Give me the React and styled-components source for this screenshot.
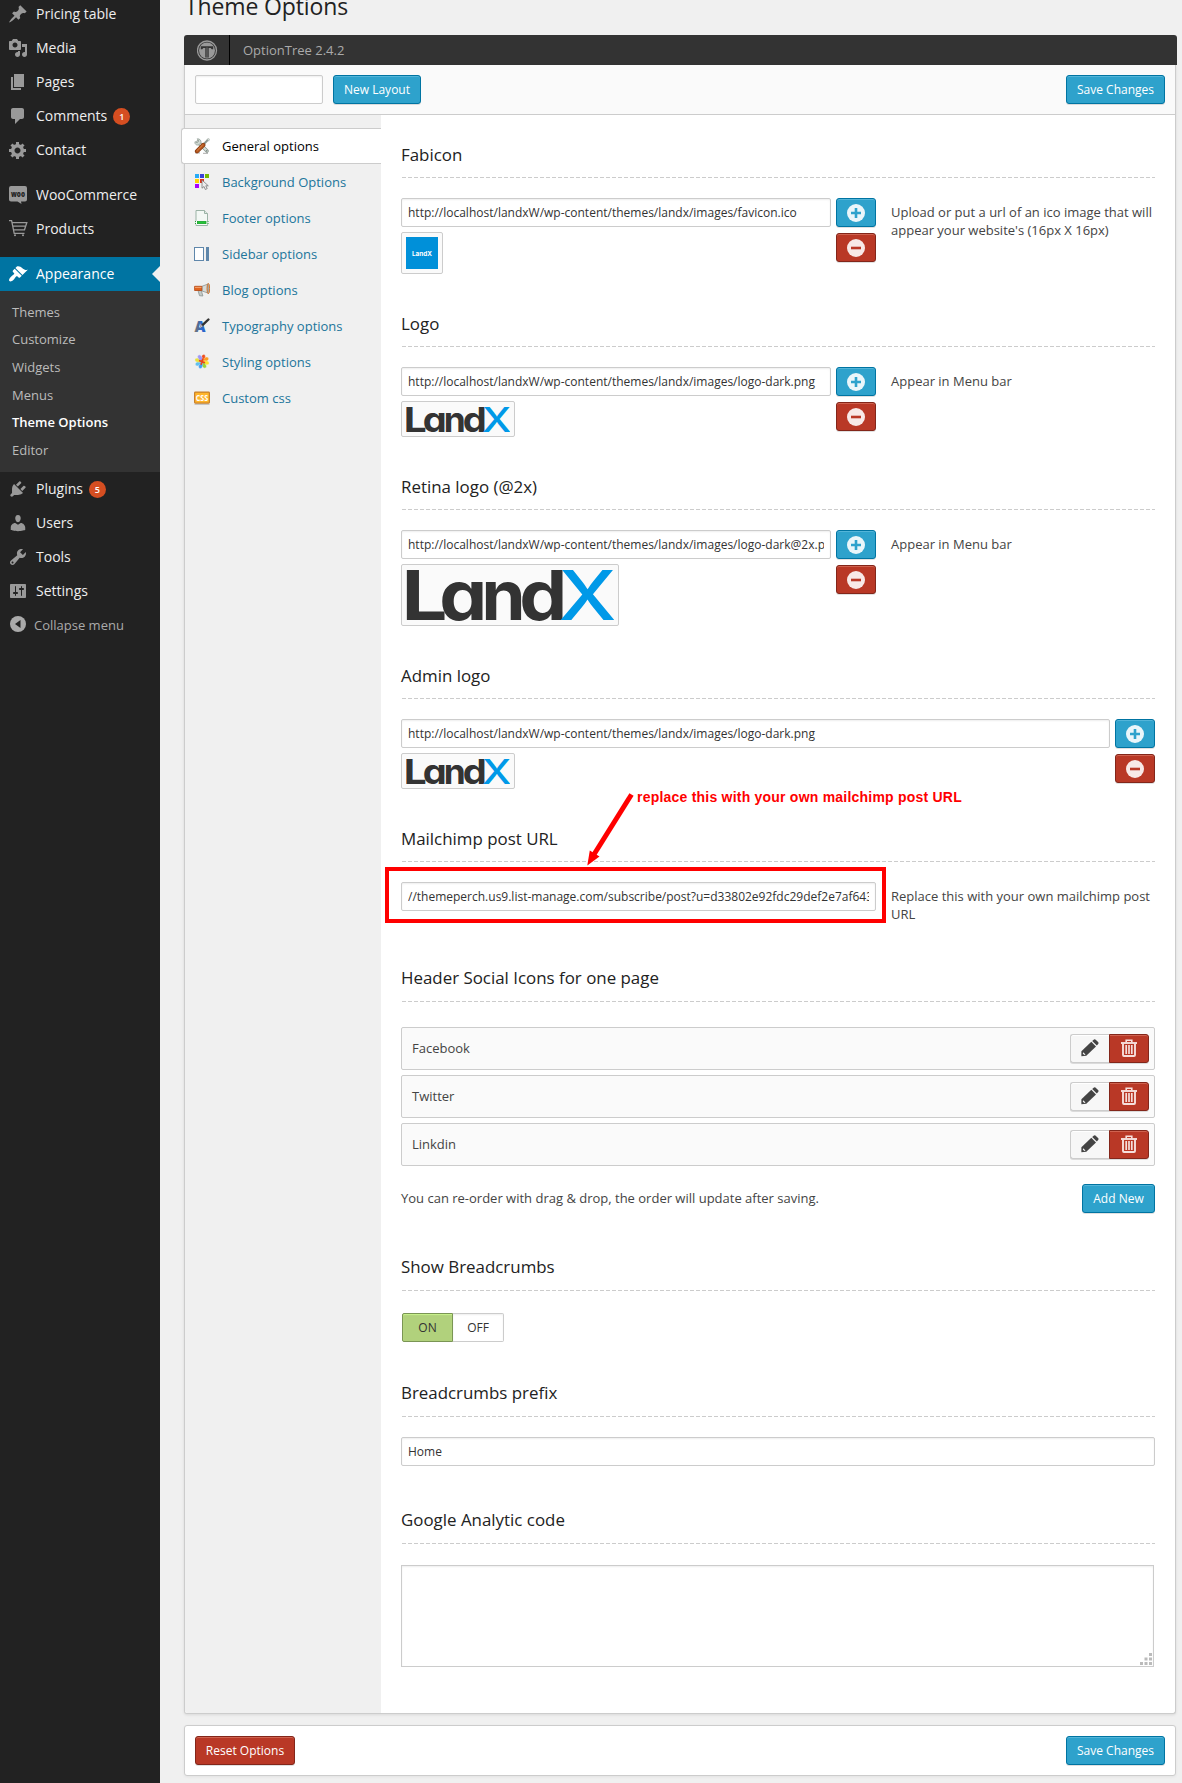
import React from "react";
import styled, { createGlobalStyle } from "styled-components";

const Global = createGlobalStyle`
  *, *::before, *::after { box-sizing: border-box; }
  html, body { margin: 0; padding: 0; background: #f0f0f0; }
  body {
    font-family: "Open Sans", sans-serif;
    font-size: 13px;
    line-height: 18px;
    color: #444;
    overflow: hidden;
  }
  input, textarea, button { font-family: inherit; }
`;

/* ---------- shell ---------- */

const Shell = styled.div`
  display: flex;
  width: 1182px;
  height: 1783px;
  overflow: hidden;
`;

const AdminMenu = styled.nav`
  flex: 0 0 160px;
  background: #222;
  margin-top: -3px;
  display: flex;
  flex-direction: column;
`;

const MenuItem = styled.a`
  position: relative;
  display: flex;
  align-items: center;
  height: 34px;
  flex: none;
  padding-left: 8px;
  font-size: 14px;
  color: ${(p) => (p.$active ? "#fff" : "#eee")};
  background: ${(p) => (p.$active ? "#0074a2" : "transparent")};
  margin-top: ${(p) => (p.$spaced ? 11 : 0)}px;
  svg {
    flex: none;
    width: 20px;
    height: 20px;
    margin-right: 8px;
    fill: ${(p) => (p.$active ? "#fff" : "#999")};
  }
`;

const ActiveArrow = styled.span`
  position: absolute;
  right: 0;
  top: 9px;
  border: 8px solid transparent;
  border-left-width: 0;
  border-right-color: #f0f0f0;
`;

const Count = styled.span`
  width: 17px;
  height: 17px;
  margin: 1px 0 0 6px;
  border-radius: 50%;
  background: #d54e21;
  color: #fff;
  font-size: 9px;
  font-weight: 600;
  line-height: 17px;
  text-align: center;
`;

const Submenu = styled.div`
  flex: none;
  background: #333;
  padding: 7px 0 8px;
  height: 181px;
  display: grid;
  grid-template-rows: repeat(6, 1fr);
`;

const SubItem = styled.a`
  display: flex;
  align-items: center;
  padding-left: 12px;
  font-size: 13px;
  color: ${(p) => (p.$current ? "#fff" : "#bbb")};
  font-weight: ${(p) => (p.$current ? 600 : 400)};
`;

const Collapse = styled.div`
  display: flex;
  align-items: center;
  height: 34px;
  padding-left: 10px;
  gap: 8px;
  font-size: 13px;
  color: #aaa;
  svg { margin-top: -2px; }
`;

const Main = styled.main`
  flex: 1;
  min-width: 0;
  padding-left: 24px;
`;

const PageTitle = styled.h2`
  margin: -8px 0 0;
  height: 43px;
  padding-left: 1px;
  font-size: 23px;
  line-height: 29px;
  font-weight: 400;
  letter-spacing: -0.13px;
  color: #222;
`;

/* ---------- option tree chrome ---------- */

const Header = styled.header`
  display: flex;
  align-items: center;
  width: 993px;
  height: 30px;
  border-radius: 3px 3px 0 0;
  background: #333;
  color: #aaa;
`;

const HeaderLogo = styled.div`
  width: 46px;
  height: 30px;
  padding: 5px 0 0 13px;
  border-right: 1px solid #000;
  margin-right: 13px;
`;

const Panel = styled.section`
  width: 992px;
  border: 1px solid #ccc;
  border-top: 0;
  border-radius: 0 0 3px 3px;
  background: #fff;
  box-shadow: 0 1px 3px rgba(0, 0, 0, 0.1);
`;

const Toolbar = styled.div`
  display: flex;
  align-items: flex-start;
  height: 50px;
  padding: 10px;
  gap: 10px;
  background: #fafafa;
  border-bottom: 1px solid #ccc;
`;

const Footer = styled.section`
  display: flex;
  justify-content: space-between;
  width: 992px;
  height: 51px;
  margin-top: 11px;
  padding: 10px;
  border: 1px solid #ccc;
  border-radius: 3px;
  background: #fff;
  box-shadow: 0 1px 3px rgba(0, 0, 0, 0.06);
`;

const Spacer = styled.div`
  flex: 1;
`;

const tones = {
  blue: { bg: "#2ea2cc", line: "#0074a2", lit: "rgba(120,200,230,.5)", fg: "#fff" },
  red: { bg: "#b93826", line: "#83261a", lit: "rgba(230,140,120,.5)", fg: "#fff" },
  plain: { bg: "#f7f7f7", line: "#ccc", lit: "#fff", fg: "#555" },
};

const Button = styled.button`
  display: flex;
  align-items: center;
  justify-content: center;
  flex: none;
  width: ${(p) => p.$w}px;
  height: 29px;
  padding: 0;
  font-size: 12px;
  line-height: 26px;
  white-space: nowrap;
  color: ${(p) => tones[p.$tone].fg};
  background: ${(p) => tones[p.$tone].bg};
  border: 1px solid ${(p) => tones[p.$tone].line};
  border-radius: ${(p) => p.$round || "3px"};
  border-right-width: ${(p) => (p.$joined ? 0 : 1)}px;
  box-shadow: inset 0 1px 0 ${(p) => tones[p.$tone].lit}, 0 1px 0 rgba(0, 0, 0, 0.12);
`;

const Columns = styled.div`
  display: flex;
  height: 1598px;
`;

const Tabs = styled.div`
  flex: 0 0 196px;
  background: #f0f0f0;
  padding-top: 13px;
  border-radius: 0 0 0 3px;
`;

const Tab = styled.a`
  display: flex;
  align-items: center;
  height: 36px;
  padding-left: 9px;
  gap: 12px;
  color: #21759b;
  svg { flex: none; }
  ${(p) =>
    p.$active &&
    `
    margin-left: -4px;
    padding-left: 12px;
    background: #fff;
    color: #000;
    border: 1px solid #ccc;
    border-right: 0;
    border-radius: 3px 0 0 3px;
  `}
`;

const Content = styled.div`
  width: 794px;
  padding: 17px 20px 0;
`;

/* ---------- fields ---------- */

const Section = styled.section`
  padding-bottom: ${(p) => p.$after ?? 27}px;
`;

const Label = styled.h3`
  margin: 0;
  height: 46px;
  padding-top: ${(p) => (p.$raised ? 11 : 12)}px;
  font-size: 16.9px;
  line-height: 22px;
  font-weight: 400;
  color: #222;
  background: repeating-linear-gradient(90deg, #fff 0 1px, #ccc 1px 5px, #fff 5px 6px) 0 45px / 100% 1px no-repeat;
`;

const Field = styled.div`
  display: flex;
  align-items: flex-start;
  gap: 15px;
  padding-top: ${(p) => p.$top ?? 20}px;
`;

const Control = styled.div`
  position: relative;
  display: grid;
  grid-template-columns: ${(p) => (p.$buttons ? "1fr 40px" : "1fr")};
  column-gap: 5px;
  width: ${(p) => (p.$wide ? 754 : 475)}px;
  flex: none;
`;

const Stack = styled.div`
  display: flex;
  flex-direction: column;
  align-items: flex-start;
  gap: ${(p) => p.$gap || 5}px;
`;

const TextInput = styled.input`
  display: block;
  width: ${(p) => (p.$w ? p.$w + "px" : "100%")};
  height: 29px;
  margin: 0;
  padding: 0 6px;
  border: 1px solid #ccc;
  border-radius: 2px;
  background: #fff;
  box-shadow: inset 0 1px 2px rgba(0, 0, 0, 0.07);
  color: #333;
  font-size: 12px;
  outline: none;
`;

const Thumb = styled.div`
  padding: 4px;
  border: 1px solid #ccc;
  border-radius: 2px;
  background: #fafafa;
  svg { display: block; }
`;

const Desc = styled.p`
  margin: 0;
  width: 264px;
  padding: 5px 0;
  font-size: 13px;
  line-height: 18.2px;
  white-space: pre-line;
`;

const Row = styled.div`
  display: flex;
  align-items: center;
  justify-content: space-between;
  height: 43px;
  margin-bottom: 5px;
  padding: 0 5px 0 10px;
  border: 1px solid #ccc;
  border-radius: 2px;
  background: #fafafa;
`;

const RowText = styled.span`
  padding-bottom: 2px;
`;

const Pair = styled.div`
  display: flex;
  svg { margin-top: -2px; }
`;

const AddRow = styled.div`
  display: flex;
  align-items: center;
  justify-content: space-between;
  padding-top: 13px;
`;

const Switch = styled.div`
  display: flex;
  margin-left: 1px;
`;

const SwitchSide = styled.span`
  width: 51px;
  height: 29px;
  font-size: 12px;
  line-height: 27px;
  text-align: center;
  color: #333;
  border: 1px solid ${(p) => (p.$on ? "#7a9554" : "#ccc")};
  border-left-width: ${(p) => (p.$on ? 1 : 0)}px;
  border-radius: ${(p) => (p.$on ? "2px 0 0 2px" : "0 2px 2px 0")};
  background: ${(p) => (p.$on ? "#b1d17c" : "#fff")};
  box-shadow: inset 0 1px ${(p) => (p.$on ? "1px #c9f28c" : "2px rgba(0,0,0,.07)")};
`;

const CodeWrap = styled.div`
  position: relative;
  width: 753px;
  height: 102px;
  svg { position: absolute; right: 2px; bottom: 2px; }
`;

const Code = styled.textarea`
  display: block;
  width: 100%;
  height: 100%;
  border: 1px solid #ccc;
  box-shadow: inset 0 1px 2px rgba(0, 0, 0, 0.07);
  resize: none;
  outline: none;
`;

/* ---------- red call-out over the Mailchimp field ---------- */

const Marker = styled.div`
  position: absolute;
  left: -16px;
  top: -15px;
  width: 501px;
  height: 56px;
  border: 4px solid #f00;
  pointer-events: none;
`;

const MarkerArrow = styled.svg`
  position: absolute;
  left: 176px;
  top: -92px;
`;

const MarkerText = styled.span`
  position: absolute;
  left: 236px;
  top: -94px;
  color: #f00;
  font: bold 14px/18px "Liberation Sans", Arial, sans-serif;
  letter-spacing: 0.22px;
  white-space: nowrap;
`;

/* ---------- drawings ---------- */

const dash = {
  pin: "M10.44 3.02l1.82-1.82 6.36 6.35-1.83 1.82c-1.05-.68-2.48-.57-3.41.36l-.75.75c-.92.93-1.04 2.35-.35 3.41l-1.83 1.82-2.41-2.41-2.8 2.79c-.42.42-3.38 2.71-3.8 2.29s1.86-3.39 2.28-3.81l2.79-2.79L4.1 9.36l1.83-1.82c1.05.69 2.48.57 3.4-.36l.75-.75c.93-.92 1.05-2.35.36-3.41z",
  media: "M13 11V4c0-.55-.45-1-1-1h-1.67L9 1H5L3.67 3H2c-.55 0-1 .45-1 1v7c0 .55.45 1 1 1h10c.55 0 1-.45 1-1zM7 4.5c1.38 0 2.5 1.12 2.5 2.5S8.38 9.5 7 9.5 4.5 8.38 4.5 7 5.62 4.5 7 4.5zM14 6h5v10.5c0 1.38-1.12 2.5-2.5 2.5S14 17.88 14 16.5s1.12-2.5 2.5-2.5c.17 0 .34.02.5.05V9h-3V6zm-4 8.05V13h2v3.5c0 1.38-1.12 2.5-2.5 2.5S7 17.88 7 16.5 8.12 14 9.5 14c.17 0 .34.02.5.05z",
  page: "M6 15V2h10v13H6zm-1 1h8v2H3V5h2v11z",
  comment: "M5 2h9c1.1 0 2 .9 2 2v7c0 1.1-.9 2-2 2h-2l-5 5v-5H5c-1.1 0-2-.9-2-2V4c0-1.1.9-2 2-2z",
  gear: "M18 12h-2.18c-.17.7-.44 1.35-.81 1.93l1.54 1.54-2.1 2.1-1.54-1.54c-.58.36-1.23.63-1.91.79V19H8v-2.18c-.68-.16-1.33-.43-1.91-.79l-1.54 1.54-2.12-2.12 1.54-1.54c-.36-.58-.63-1.23-.79-1.91H1V9.03h2.17c.16-.7.44-1.35.8-1.94L2.43 5.55l2.1-2.1 1.54 1.54c.58-.37 1.24-.64 1.93-.81V2h3v2.18c.68.16 1.33.43 1.91.79l1.54-1.54 2.12 2.12-1.54 1.54c.36.59.64 1.24.8 1.94H18V12zm-8.5 1.5c1.66 0 3-1.34 3-3s-1.34-3-3-3-3 1.34-3 3 1.34 3 3 3z",
  brush: "M14.48 11.06L7.41 3.99l1.5-1.5c.5-.56 2.3-.47 3.51.32 1.21.8 1.43 1.28 2.91 2.1 1.18.64 2.45 1.26 4.45.85zm-.71.71L6.7 4.7 4.93 6.47c-.39.39-.39 1.02 0 1.41l1.06 1.06c.39.39.39 1.03 0 1.42-.6.6-1.43 1.11-2.21 1.69-.35.26-.7.53-1.01.84C1.43 14.23.4 16.08 1.4 17.07c.99 1 2.84-.03 4.18-1.36.31-.31.58-.66.85-1.02.57-.78 1.08-1.61 1.69-2.21.39-.39 1.02-.39 1.41 0l1.06 1.06c.39.39 1.02.39 1.41 0z",
  plug: "M13.11 4.36L9.87 7.6 8 5.73l3.24-3.24c.35-.34 1.05-.2 1.56.32.52.51.66 1.21.31 1.55zm-8 1.77l.91-1.12 9.01 9.01-1.19.84c-.71.71-2.63 1.16-3.82 1.16H6.14L4.9 17.26c-.59.59-1.54.59-2.12 0-.59-.58-.59-1.53 0-2.12l1.24-1.24v-3.88c0-1.13.4-3.19 1.09-3.89zm7.26 3.97l3.24-3.24c.34-.35 1.04-.21 1.55.31.52.51.66 1.21.31 1.55l-3.24 3.25z",
  user: "M10 9.25c-2.27 0-2.73-3.44-2.73-3.44C7 4.02 7.82 2 9.97 2c2.16 0 2.98 2.02 2.71 3.81 0 0-.41 3.44-2.68 3.44zm0 2.57L12.72 10c2.39 0 4.52 2.33 4.52 4.53v2.49s-3.65 1.13-7.24 1.13c-3.65 0-7.24-1.13-7.24-1.13v-2.49c0-2.25 1.94-4.48 4.47-4.48z",
  wrench: "M16.68 9.77c-1.34 1.34-3.3 1.67-4.95.99l-5.41 6.52c-.99.99-2.59.99-3.58 0s-.99-2.59 0-3.57l6.52-5.42c-.68-1.65-.35-3.61.99-4.95 1.28-1.28 3.12-1.62 4.72-1.06l-2.89 2.89 2.82 2.82 2.86-2.87c.53 1.58.18 3.39-1.08 4.65zM3.81 16.21c.4.39 1.04.39 1.43 0 .4-.4.4-1.04 0-1.43-.39-.4-1.03-.4-1.43 0-.39.39-.39 1.03 0 1.43z",
  sliders: "M18 16V4c0-.55-.45-1-1-1H3c-.55 0-1 .45-1 1v12c0 .55.45 1 1 1h14c.55 0 1-.45 1-1zM8 11h1c.55 0 1 .45 1 1s-.45 1-1 1H8v1.5c0 .28-.22.5-.5.5s-.5-.22-.5-.5V13H6c-.55 0-1-.45-1-1s.45-1 1-1h1V5.5c0-.28.22-.5.5-.5s.5.22.5.5V11zm5-2h-1c-.55 0-1-.45-1-1s.45-1 1-1h1V5.5c0-.28.22-.5.5-.5s.5.22.5.5V7h1c.55 0 1 .45 1 1s-.45 1-1 1h-1v5.5c0 .28-.22.5-.5.5s-.5-.22-.5-.5V9z",
};

const Dashicon = ({ name }) => (
  <svg viewBox="0 0 20 20">
    <path fillRule="evenodd" d={dash[name]} />
  </svg>
);

const WooIcon = () => (
  <svg viewBox="0 0 20 20">
    <path d="M3 1h14q2 0 2 2v11.5q0 2-2 2h-4l.5 2.500-4-2.500H3q-2 0-2-2V3q0-2 2-2z" />
    <text x="3" y="11.500" textLength="14" lengthAdjust="spacingAndGlyphs" fontSize="8" fontWeight="800" style={{ fill: "#222" }}>
      woo
    </text>
  </svg>
);

const CartIcon = () => (
  <svg viewBox="0 0 20 20">
    <g fill="none" stroke="#999" strokeWidth="1.300">
      <path d="M1 1.700h2.600l2.600 12.600h10.300M4.200 3.600h14.600l-2.300 7.200H5.600M4.800 7.100h12.700" />
    </g>
    <circle cx="7" cy="16.200" r="1" />
    <circle cx="15" cy="16.200" r="1" />
  </svg>
);

const CollapseIcon = () => (
  <svg width="16" height="16" viewBox="0 0 16 16">
    <circle cx="8" cy="8" r="8" fill="#aaa" />
    <path d="M10.500 4v8L5 8z" fill="#222" />
  </svg>
);

const OptionTreeLogo = () => (
  <svg width="21" height="21" viewBox="0 0 21 21">
    <circle cx="10" cy="10.500" r="9.500" fill="none" stroke="#999" strokeWidth="1.300" />
    <circle cx="10" cy="10.500" r="8" fill="#999" />
    <path d="M3.800 6.200h12.400v3h-1.500l-1-1.300h-2v9.600H8.300V7.900h-2l-1 1.300H3.800z" fill="#333" />
    <path d="M9.500 7.500h1V18h-1z" fill="#777" />
  </svg>
);

const ToolsIcon = () => (
  <svg width="16" height="16" viewBox="0 0 16 16">
    <path d="M1 14.800h5M9 15.300h5" stroke="#bbb" strokeWidth="1.200" />
    <path d="M4 4l9 9" stroke="#8d9890" strokeWidth="3.600" strokeLinecap="round" />
    <path d="M4 4l9 9" stroke="#d4ded8" strokeWidth="2" strokeLinecap="round" />
    <path d="M3.200.8l1.600 2.200-1.600 1.800L1 3.600C.3 6 2.600 7.800 5 6.800L7 4.600C7.400 2.400 5.500.5 3.200.8z" fill="#cfd9d3" stroke="#8d9890" strokeWidth=".7" />
    <circle cx="12.700" cy="12.800" r=".9" fill="#7f8a84" />
    <path d="M9 7l5.200-5.500" stroke="#8d9890" strokeWidth="2" />
    <path d="M13 1.200l2-.6.600.8-1 1.800z" fill="#dfe5e2" stroke="#8d9890" strokeWidth=".5" />
    <path d="M3 13.200L9.300 7" stroke="#8a3b10" strokeWidth="4.200" strokeLinecap="round" />
    <path d="M3 13.200L9.300 7" stroke="#b85a20" strokeWidth="2.600" strokeLinecap="round" />
    <path d="M3.200 12.400L8.600 7" stroke="#e9a06c" strokeWidth=".6" />
  </svg>
);

const SwatchIcon = () => (
  <svg width="16" height="16" viewBox="0 0 16 16">
    <rect x="1" y="0" width="4" height="4" fill="#29abf5" />
    <rect x="6" y="0" width="4" height="4" fill="#3a41d6" />
    <rect x="11" y="0" width="4" height="4" fill="#76b900" />
    <rect x="1" y="5" width="4" height="4" fill="#ffd500" />
    <rect x="6" y="5" width="4" height="4" fill="#e23318" />
    <rect x="1" y="10" width="4" height="4" fill="#a800ff" />
    <path d="M8 6v8.200l2-1.700 1.300 3 1.900-.9-1.400-2.800h2.500z" fill="#eee" stroke="#777" strokeWidth=".8" />
  </svg>
);

const FooterIcon = () => (
  <svg width="16" height="16" viewBox="0 0 16 16">
    <path d="M2 .5h8.500L13.500 3.500v12H2z" fill="#f3f8f5" stroke="#9bb3a6" />
    <path d="M10.500.5v3h3" fill="#dfe9e4" stroke="#9bb3a6" />
    <rect x="1.500" y="10.800" width="12" height="3.600" fill="#fff" />
    <path d="M1.500 11v3M14 11v3" stroke="#2d9c3c" strokeWidth="1" strokeDasharray="1 1" />
    <rect x="3.400" y="11.400" width="8.600" height="2.200" fill="#23c637" stroke="#18a32b" strokeWidth=".8" />
  </svg>
);

const SidebarIcon = () => (
  <svg width="16" height="16" viewBox="0 0 16 16">
    <rect x=".5" y="1.500" width="9" height="13" fill="#fff" stroke="#5f87ab" />
    <rect x="12" y="1" width="3" height="14" fill="#5f87ab" />
  </svg>
);

const HornIcon = () => (
  <svg width="16" height="16" viewBox="0 0 16 16">
    <path d="M4 8.500l1.500 5.200 3.400.3-1.600-5.300z" fill="#c4cac8" stroke="#8c9492" strokeWidth=".8" />
    <path d="M8 4.300l6-2.300v9L8 9z" fill="#d5dad8" stroke="#8c9492" strokeWidth=".8" />
    <path d="M.6 4.300h7.200v4.200H.6z" fill="#e2631d" stroke="#b34610" strokeWidth=".8" />
    <path d="M1 5.400h6.500" stroke="#f6ad7c" strokeWidth=".9" />
    <ellipse cx="14.300" cy="6.600" rx="1.300" ry="5.200" fill="#a4a9a7" stroke="#d9711f" strokeWidth=".9" />
  </svg>
);

const TypeIcon = () => (
  <svg width="16" height="16" viewBox="0 0 16 16">
    <defs>
      <linearGradient id="steel" x1="0" x2="1">
        <stop offset="0" stopColor="#777" />
        <stop offset=".4" stopColor="#4d6a9c" />
        <stop offset=".6" stopColor="#2a6ad0" />
        <stop offset="1" stopColor="#2a62c4" />
      </linearGradient>
    </defs>
    <text x="0.500" y="13.500" fontSize="15" fontWeight="800" fill="url(#steel)" textLength="11" lengthAdjust="spacingAndGlyphs">
      A
    </text>
    <path d="M6.500 8.500l1.200-2.300 2 1.600-2.200 1.500z" fill="#c9cdd2" stroke="#555" strokeWidth=".5" />
    <path d="M9 6.700l5.400-5.200" stroke="#333" strokeWidth="2.400" strokeLinecap="round" />
  </svg>
);

const petals = ["#f0501e", "#ff9d1e", "#ffe22b", "#9bd233", "#3f9df5", "#5fc0f0", "#e8e23e", "#a09af5"];

const FlowerIcon = () => (
  <svg width="16" height="16" viewBox="0 0 16 16">
    {petals.map((c, i) => (
      <ellipse key={c} cx="8.600" cy="3.500" rx="2" ry="3.300" fill={c} stroke="#f0f0f0" strokeWidth=".3" transform={`rotate(${i * 45 + 10} 8 7.500)`} />
    ))}
    <path d="M5 6.500L8 7.600l1-3.200M8 7.600l3 1.200M8 7.600l-1 3.200" stroke="#e8431c" strokeWidth="1.700" fill="none" />
  </svg>
);

const CssIcon = () => (
  <svg width="16" height="16" viewBox="0 0 16 16">
    <path d="M.5 14.300h15" stroke="#bbb" />
    <rect x=".6" y="2.100" width="14.800" height="11" rx=".8" fill="#ffb52b" stroke="#c8802a" strokeWidth="1.200" />
    <text x="1.800" y="10.700" fontSize="8.200" fontWeight="700" fill="#fff" textLength="12.400" lengthAdjust="spacingAndGlyphs">
      CSS
    </text>
  </svg>
);

const PlusIcon = () => (
  <svg width="18" height="18" viewBox="0 0 18 18">
    <circle cx="9" cy="9" r="9" fill="#eaf6fa" />
    <path d="M9 4v10M4 9h10" stroke="#2ea2cc" strokeWidth="2.600" />
  </svg>
);

const MinusIcon = () => (
  <svg width="18" height="18" viewBox="0 0 18 18">
    <circle cx="9" cy="9" r="9" fill="#f8e9e7" />
    <path d="M4 9h10" stroke="#b93826" strokeWidth="2.600" />
  </svg>
);

const PencilIcon = () => (
  <svg width="18" height="18" viewBox="0 0 18 18">
    <path d="M.4 12.200L10.300 2.800l4.700 4.700L5.300 16.800.4 17.300z" fill="#444" />
    <path d="M11.200 1.900L13 .5q.9-.6 1.700.2l2.400 2.400q.8.9.1 1.800l-1.400 1.700z" fill="#444" />
    <path d="M2.200 13.200l2.300 2.300-1.300.5-1.400-1.400z" fill="#f7f7f7" />
  </svg>
);

const TrashIcon = () => (
  <svg width="16" height="18" viewBox="0 0 16 18">
    <g fill="none" stroke="#f6dfdc" strokeWidth="1.600">
      <path d="M0 4h16" strokeWidth="1.900" />
      <path d="M5.200 3.400V1.200h5.600v2.200" />
      <path d="M2 4.500v11.500q0 1 1 1h10q1 0 1-1V4.500" strokeWidth="1.900" />
      <path d="M5.200 6v9M8 6v9M10.800 6v9" strokeWidth="1.700" />
    </g>
  </svg>
);

const Wordmark = styled.svg`
  font-family: Inter, "Open Sans", sans-serif;
  font-weight: 700;
`;

const letters = [
  { ch: "L", x: -4.5, len: 46 },
  { ch: "ɑ", x: 33.3, len: 48 },
  { ch: "n", x: 75.5, len: 44 },
  { ch: "d", x: 113.3, len: 48 },
];

const LandX = ({ w }) => (
  <Wordmark width={w} height={w / 4} viewBox="0 0 208 52" fontSize="69" aria-label="LandX">
    {letters.map((l) => (
      <text key={l.ch} x={l.x} y="51" fill="#333" textLength={l.len} lengthAdjust="spacingAndGlyphs">
        {l.ch}
      </text>
    ))}
    <text x="152.500" y="51" fontWeight="500" fill="#0099e8" textLength="58" lengthAdjust="spacingAndGlyphs">
      X
    </text>
  </Wordmark>
);

const Favicon = () => (
  <Wordmark width="32" height="32" viewBox="0 0 32 32">
    <rect width="32" height="32" fill="#0090d9" />
    <text x="6" y="18.800" fontSize="6.300" fill="#fff" textLength="20" lengthAdjust="spacingAndGlyphs">
      LandX
    </text>
  </Wordmark>
);

/* ---------- page ---------- */

const topItems = [
  { label: "Pricing table", icon: <Dashicon name="pin" /> },
  { label: "Media", icon: <Dashicon name="media" /> },
  { label: "Pages", icon: <Dashicon name="page" /> },
  { label: "Comments", icon: <Dashicon name="comment" />, count: 1 },
  { label: "Contact", icon: <Dashicon name="gear" /> },
  { label: "WooCommerce", icon: <WooIcon />, spaced: true },
  { label: "Products", icon: <CartIcon /> },
  { label: "Appearance", icon: <Dashicon name="brush" />, spaced: true, active: true },
];

const subItems = ["Themes", "Customize", "Widgets", "Menus", "Theme Options", "Editor"];

const lowItems = [
  { label: "Plugins", icon: <Dashicon name="plug" />, count: 5 },
  { label: "Users", icon: <Dashicon name="user" /> },
  { label: "Tools", icon: <Dashicon name="wrench" /> },
  { label: "Settings", icon: <Dashicon name="sliders" /> },
];

const tabs = [
  { label: "General options", icon: <ToolsIcon />, active: true },
  { label: "Background Options", icon: <SwatchIcon /> },
  { label: "Footer options", icon: <FooterIcon /> },
  { label: "Sidebar options", icon: <SidebarIcon /> },
  { label: "Blog options", icon: <HornIcon /> },
  { label: "Typography options", icon: <TypeIcon /> },
  { label: "Styling options", icon: <FlowerIcon /> },
  { label: "Custom css", icon: <CssIcon /> },
];

const base = "http://localhost/landxW/wp-content/themes/landx/images/";

const Menu = ({ items }) =>
  items.map((m) => (
    <MenuItem key={m.label} $active={m.active} $spaced={m.spaced}>
      {m.icon}
      {m.label}
      {m.count && <Count>{m.count}</Count>}
      {m.active && <ActiveArrow />}
    </MenuItem>
  ));

const Upload = ({ label, value, thumb, desc }) => (
  <Section>
    <Label>{label}</Label>
    <Field>
      <Control $buttons $wide={!desc}>
        <Stack>
          <TextInput readOnly value={value} />
          <Thumb>{thumb}</Thumb>
        </Stack>
        <Stack $gap={6}>
          <Button $tone="blue" $w={40}><PlusIcon /></Button>
          <Button $tone="red" $w={40}><MinusIcon /></Button>
        </Stack>
      </Control>
      {desc && <Desc>{desc}</Desc>}
    </Field>
  </Section>
);

export default function App() {
  return (
    <Shell>
      <Global />
      <AdminMenu>
        <Menu items={topItems} />
        <Submenu>
          {subItems.map((s) => (
            <SubItem key={s} $current={s === "Theme Options"}>{s}</SubItem>
          ))}
        </Submenu>
        <Menu items={lowItems} />
        <Collapse>
          <CollapseIcon />
          Collapse menu
        </Collapse>
      </AdminMenu>
      <Main>
        <PageTitle>Theme Options</PageTitle>
        <Header>
          <HeaderLogo><OptionTreeLogo /></HeaderLogo>
          OptionTree 2.4.2
        </Header>
        <Panel>
          <Toolbar>
            <TextInput $w={128} readOnly value="" />
            <Button $tone="blue" $w={88}>New Layout</Button>
            <Spacer />
            <Button $tone="blue" $w={99}>Save Changes</Button>
          </Toolbar>
          <Columns>
            <Tabs>
              {tabs.map((t) => (
                <Tab key={t.label} $active={t.active}>
                  {t.icon}
                  {t.label}
                </Tab>
              ))}
            </Tabs>
            <Content>
              <Upload
                label="Fabicon"
                value={base + "favicon.ico"}
                thumb={<Favicon />}
                desc={"Upload or put a url of an ico image that will\nappear your website's (16px X 16px)"}
              />
              <Upload label="Logo" value={base + "logo-dark.png"} thumb={<LandX w={104} />} desc="Appear in Menu bar" />
              <Upload label="Retina logo (@2x)" value={base + "logo-dark@2x.png"} thumb={<LandX w={208} />} desc="Appear in Menu bar" />
              <Upload label="Admin logo" value={base + "logo-dark.png"} thumb={<LandX w={104} />} />

              <Section $after={27.6}>
                <Label>Mailchimp post URL</Label>
                <Field>
                  <Control>
                    <TextInput readOnly value="//themeperch.us9.list-manage.com/subscribe/post?u=d33802e92fdc29def2e7af643" />
                    <Marker />
                    <MarkerArrow width="60" height="80" viewBox="0 0 60 80">
                      <path d="M54.500 4.500L16 66" stroke="#f00" strokeWidth="5" />
                      <path d="M10.300 75.500L12.800 60.500 22.500 66.500z" fill="#f00" />
                    </MarkerArrow>
                    <MarkerText>replace this with your own mailchimp post URL</MarkerText>
                  </Control>
                  <Desc>{"Replace this with your own mailchimp post\nURL"}</Desc>
                </Field>
              </Section>

              <Section $after={32}>
                <Label $raised>Header Social Icons for one page</Label>
                <Field $top={25}>
                  <Control $wide>
                    {["Facebook", "Twitter", "Linkdin"].map((n) => (
                      <Row key={n}>
                        <RowText>{n}</RowText>
                        <Pair>
                          <Button $tone="plain" $w={39} $round="3px 0 0 3px" $joined><PencilIcon /></Button>
                          <Button $tone="red" $w={40} $round="0 3px 3px 0"><TrashIcon /></Button>
                        </Pair>
                      </Row>
                    ))}
                    <AddRow>
                      <RowText>You can re-order with drag &amp; drop, the order will update after saving.</RowText>
                      <Button $tone="blue" $w={73}>Add New</Button>
                    </AddRow>
                  </Control>
                </Field>
              </Section>

              <Section $after={29}>
                <Label $raised>Show Breadcrumbs</Label>
                <Field $top={22}>
                  <Switch>
                    <SwitchSide $on>ON</SwitchSide>
                    <SwitchSide>OFF</SwitchSide>
                  </Switch>
                </Field>
              </Section>

              <Section $after={32}>
                <Label $raised>Breadcrumbs prefix</Label>
                <Field>
                  <TextInput readOnly value="Home" />
                </Field>
              </Section>

              <Section $after={0}>
                <Label $raised>Google Analytic code</Label>
                <Field $top={21}>
                  <CodeWrap>
                    <Code readOnly />
                    <svg width="12" height="12" viewBox="0 0 12 12" fill="#bbb">
                      <path d="M9 0h3v3H9zM4.500 4.500h3v3h-3zM9 4.500h3v3H9zM0 9h3v3H0zM4.500 9h3v3h-3zM9 9h3v3H9z" />
                    </svg>
                  </CodeWrap>
                </Field>
              </Section>
            </Content>
          </Columns>
        </Panel>
        <Footer>
          <Button $tone="red" $w={100}>Reset Options</Button>
          <Button $tone="blue" $w={99}>Save Changes</Button>
        </Footer>
      </Main>
    </Shell>
  );
}
